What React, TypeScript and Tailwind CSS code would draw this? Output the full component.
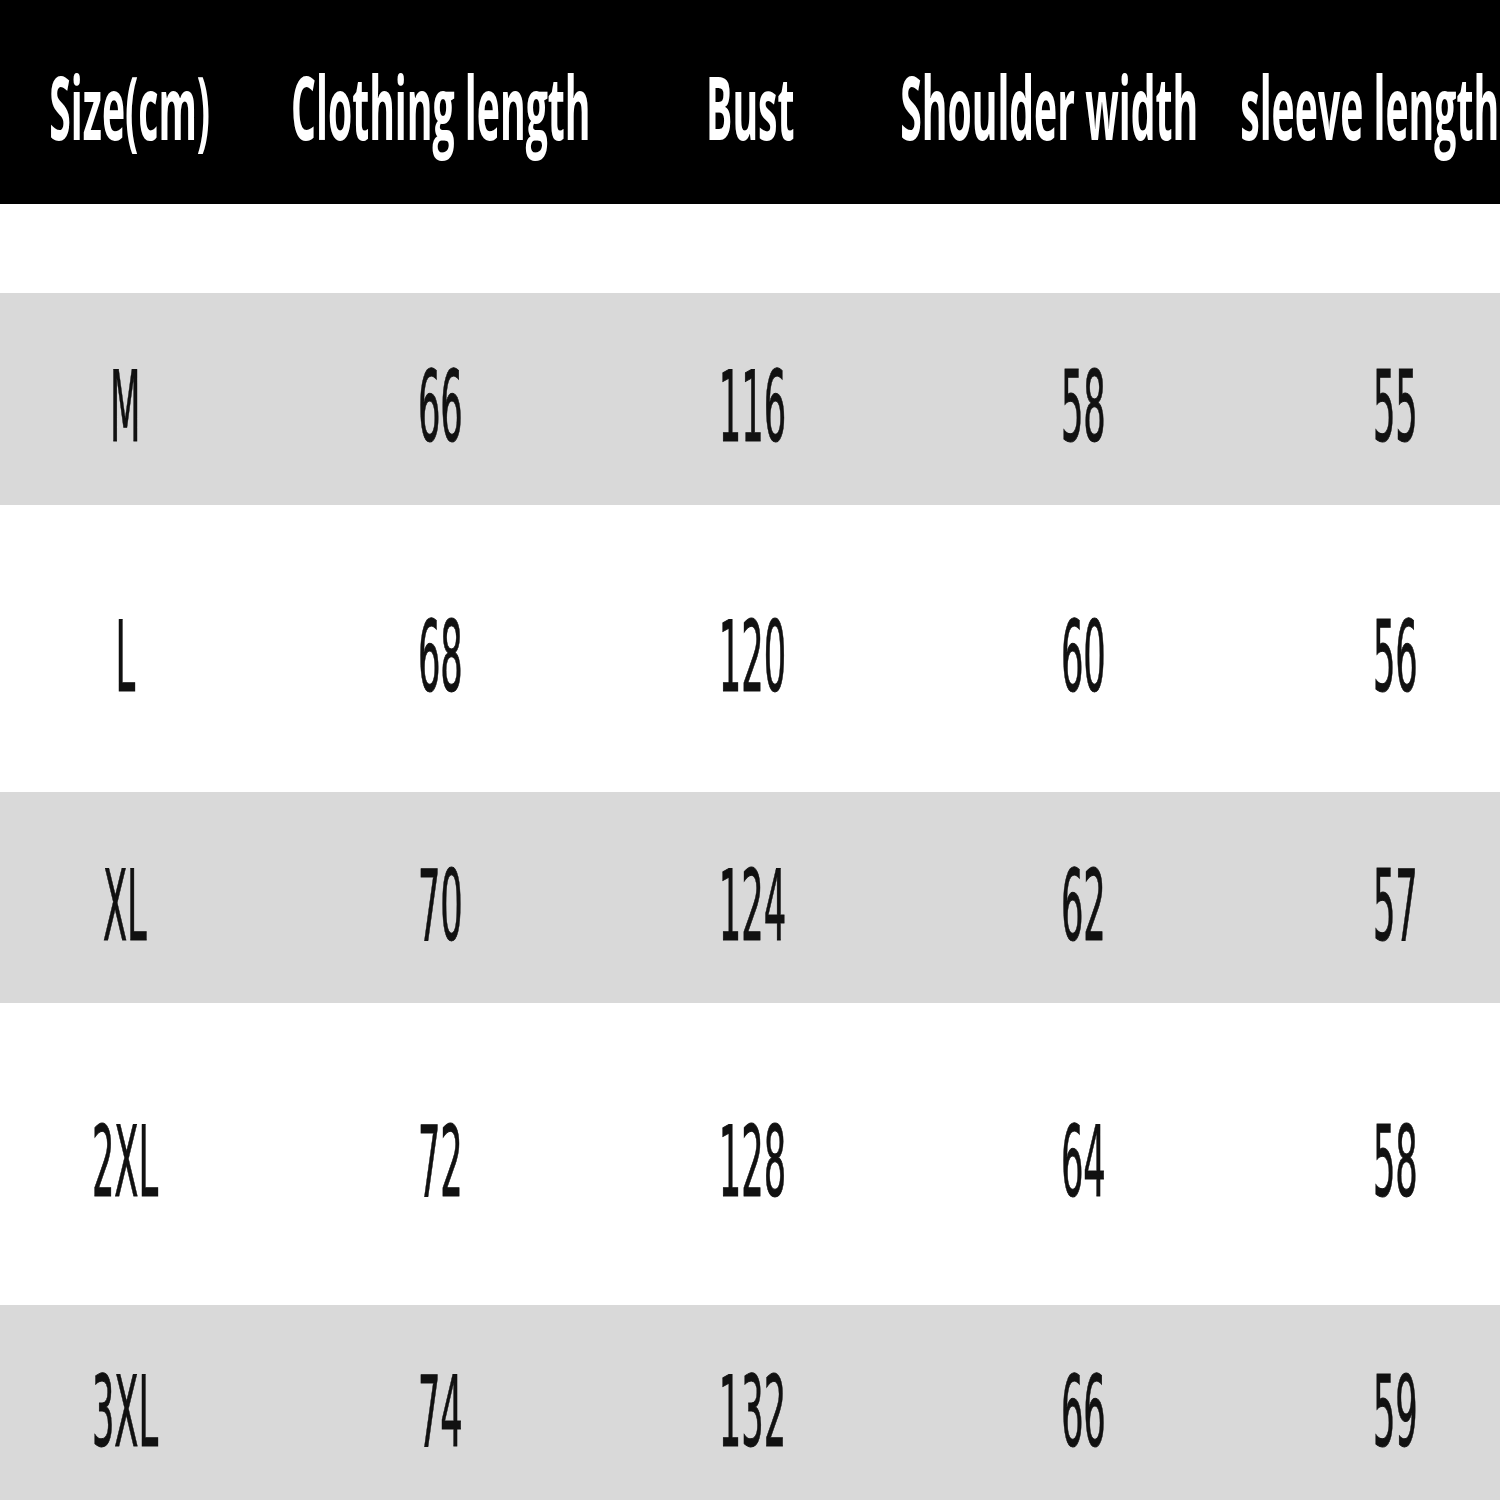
const headers = [
  { label: "Size(cm)", col: "w-[260px]" },
  { label: "Clothing length", col: "w-[362px]" },
  { label: "Bust", col: "w-[256px]" },
  { label: "Shoulder width", col: "w-[342px]" },
  { label: "sleeve length", col: "w-[300px]" },
];

const cols = ["w-[250px]", "w-[380px]", "w-[246px]", "w-[414px]", "w-[210px]"];

const rows = [
  { size: "M", values: ["66", "116", "58", "55"], bg: "bg-[#d9d9d9]", h: "h-[212px]" },
  { size: "L", values: ["68", "120", "60", "56"], bg: "bg-white", h: "h-[287px]" },
  { size: "XL", values: ["70", "124", "62", "57"], bg: "bg-[#d9d9d9]", h: "h-[211px]" },
  { size: "2XL", values: ["72", "128", "64", "58"], bg: "bg-white", h: "h-[302px]" },
  { size: "3XL", values: ["74", "132", "66", "59"], bg: "bg-[#d9d9d9]", h: "h-[198px]" },
];

function Cell({ text, col }: { text: string; col: string }) {
  return (
    <div className={`${col} shrink-0 flex justify-center`}>
      <span className="inline-block whitespace-nowrap scale-x-[0.36] origin-center font-['DejaVu_Sans',sans-serif] text-[98px] leading-none text-[#111] [-webkit-text-stroke:1px_#111]">
        {text}
      </span>
    </div>
  );
}

export default function App() {
  return (
    <div className="w-[1500px] h-[1500px] overflow-hidden bg-white">
      <div className="h-[204px] bg-black flex items-center pt-2 overflow-hidden">
        {headers.map((h) => (
          <div key={h.label} className={`${h.col} shrink-0 flex justify-center`}>
            <span className="inline-block whitespace-nowrap scale-x-[0.45] origin-center font-['Open_Sans',sans-serif] font-bold text-[87px] leading-none text-white">
              {h.label}
            </span>
          </div>
        ))}
      </div>
      <div className="h-[89px] bg-white" />
      {rows.map((r) => (
        <div key={r.size} className={`${r.h} ${r.bg} flex items-center pt-4`}>
          <Cell text={r.size} col={cols[0]} />
          {r.values.map((v, i) => (
            <Cell key={i} text={v} col={cols[i + 1]} />
          ))}
        </div>
      ))}
    </div>
  );
}
